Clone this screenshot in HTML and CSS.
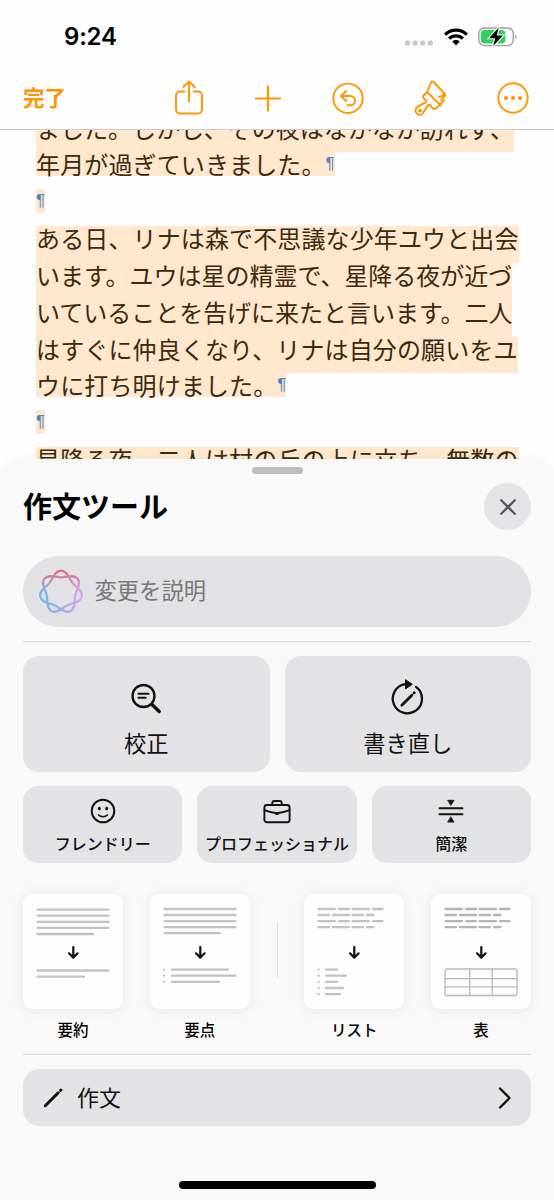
FILE: index.html
```html
<!DOCTYPE html>
<html lang="ja">
<head>
<meta charset="utf-8">
<title>作文ツール</title>
<link rel="stylesheet" href="styles.css">
</head>
<body>
<div class="screen">
  <header class="top">
    <div class="status">
      <span class="time">9:24</span>
      <div class="indicators">
        <svg width="28" height="6" viewBox="0 0 28 6" fill="#c9c9cb"><rect x="0" y=".5" width="5" height="5" rx="1.5"/><rect x="7.6" y=".5" width="5" height="5" rx="1.5"/><rect x="15.2" y=".5" width="5" height="5" rx="1.5"/><rect x="22.8" y=".5" width="5" height="5" rx="1.5"/></svg>
        <svg class="wifi" width="24" height="18" viewBox="0 0 24 18" fill="none" stroke="#000" stroke-width="3.1"><path d="M1.2 6.6C7 .6 17 .6 22.8 6.600"/><path d="M5.100 10.700C9 6.900 15 6.900 18.900 10.700"/><path d="M12 17.400l-3.700-3.900c2-1.900 5.400-1.900 7.400 0z" fill="#000" stroke="none"/></svg>
        <svg class="battery" width="40" height="22" viewBox="0 0 40 22"><rect x=".8" y="2" width="34.500" height="17.600" rx="5.500" fill="#fff" stroke="#a0a0a2" stroke-width="1.400"/><path d="M37.300 8.500v4.600c1.500-.5 1.500-4.100 0-4.600z" fill="#88888a"/><rect x="2.800" y="4" width="24.500" height="13.600" rx="3.500" fill="#34cf5e"/><path d="M20.700 1.500L11 12.200h6.200l-2 7.900L25 9.400h-6.300z" fill="#000" stroke="#fff" stroke-width="2" paint-order="stroke"/></svg>
      </div>
    </div>
    <nav class="toolbar">
      <span class="done">完了</span>
      <div class="tools">
        <svg width="36" height="38" viewBox="0 0 36 38"><path d="M13.300 12.500H9a4 4 0 0 0-4 4V30.500a4 4 0 0 0 4 4H27a4 4 0 0 0 4-4V16.500a4 4 0 0 0-4-4H22.700M18 22.500V2.500M12.300 8L18 2.300L23.700 8"/></svg>
        <svg class="plus" width="36" height="38" viewBox="0 0 36 38"><path d="M6 19.500H30M18 7.500V31.500" stroke-width="2.200"/></svg>
        <svg class="undo" width="36" height="38" viewBox="0 0 36 38"><circle cx="18" cy="19.300" r="14.700"/><path d="M16 12L11 17L16 22M11.300 17H20.500A4.600 4.600 0 0 1 20.500 26.200H17.500"/></svg>
        <svg class="brush" width="36" height="38" viewBox="0 0 36 38"><path d="M16.200 13L20.200 3.200Q21 1.700 22.500 3L33.300 14.200Q35 16 33.300 17.800L30 21.200M16.200 13L29.800 26.600M32.800 15.300Q31 18.600 27.800 17.600M16.200 13L12.800 16.200Q11.300 17.600 12.800 19.300L15 21.600Q15.700 22.800 14.500 23.600L6.600 27.700C3.700 29.600 4.200 33 5.600 34.300C7.800 36.800 10.800 36.200 12.200 33.700L16.800 26.500Q17.800 25.200 19 26.100L21.800 29.300Q23.500 30.700 25.200 29.300L33.300 21.200"/><circle cx="8.900" cy="31.600" r="1" fill="#ff9500"/></svg>
        <svg width="36" height="38" viewBox="0 0 36 38"><circle cx="18" cy="19" r="14.700"/><g fill="#ff9500" stroke="none"><circle cx="11" cy="19" r="2.100"/><circle cx="18" cy="19" r="2.100"/><circle cx="25" cy="19" r="2.100"/></g></svg>
      </div>
    </nav>
  </header>

  <main class="document">
    <div class="line tight"><span>ました。しかし、その夜はなかなか訪れず、</span></div>
    <div class="line last"><span>年月が過ぎていきました。<i>¶</i></span></div>
    <div class="line last"><span><i>¶</i></span></div>
    <div class="line"><span>ある日、リナは森で不思議な少年ユウと出会</span></div>
    <div class="line tight"><span>います。ユウは星の精霊で、星降る夜が近づ</span></div>
    <div class="line tight"><span>いていることを告げに来たと言います。二人</span></div>
    <div class="line"><span>はすぐに仲良くなり、リナは自分の願いをユ</span></div>
    <div class="line last"><span>ウに打ち明けました。<i>¶</i></span></div>
    <div class="line last"><span><i>¶</i></span></div>
    <div class="line"><span>星降る夜、二人は村の丘の上に立ち、無数の</span></div>
  </main>

  <section class="sheet">
    <div class="grabber"></div>
    <div class="sheet-head">
      <h1>作文ツール</h1>
      <button class="close"><svg width="18" height="18" viewBox="0 0 18 18" fill="none" stroke="#56565a" stroke-width="2.300" stroke-linecap="round"><path d="M2.200 2.200L15.800 15.800M15.800 2.200L2.200 15.800"/></svg></button>
    </div>
    <div class="prompt">
      <svg width="48" height="48" viewBox="-24 -24 48 48">
        <defs>
          <linearGradient id="side"><stop offset=".1" stop-color="#6db9e8"/><stop offset=".5" stop-color="#98a9ee"/><stop offset=".9" stop-color="#d6a2f3"/></linearGradient>
          <linearGradient id="warm" x2="0" y2="1"><stop offset=".08" stop-color="#df727b"/><stop offset=".28" stop-color="#dc8295" stop-opacity=".65"/><stop offset=".52" stop-color="#e091b5" stop-opacity="0"/></linearGradient>
          <path id="lobe" d="M-11.500 -9.170C-7.800 -13.800 -6.200 -21.300 0 -21.300S7.800 -13.800 11.500 -9.170"/>
          <mask id="flower" maskUnits="userSpaceOnUse" x="-24" y="-24" width="48" height="48"><g fill="none" stroke="#fff" stroke-width="2.200"><use href="#lobe"/><use href="#lobe" transform="rotate(51.430)"/><use href="#lobe" transform="rotate(102.860)"/><use href="#lobe" transform="rotate(154.290)"/><use href="#lobe" transform="rotate(205.710)"/><use href="#lobe" transform="rotate(257.140)"/><use href="#lobe" transform="rotate(308.570)"/></g></mask>
        </defs>
        <g mask="url(#flower)"><rect x="-24" y="-24" width="48" height="48" fill="url(#side)"/><rect x="-24" y="-24" width="48" height="48" fill="url(#warm)"/></g>
      </svg>
      <span>変更を説明</span>
    </div>
    <hr>
    <div class="row big">
      <button class="tile"><svg width="36" height="36" viewBox="0 0 36 36" stroke-width="2.400"><circle cx="15.500" cy="15" r="11"/><path d="M10.400 12.800H20.600M10.400 16.800H17.800" stroke-width="1.900"/><path d="M24 23.500L31.200 30.500" stroke-width="3.400"/></svg><span>校正</span></button>
      <button class="tile"><svg width="36" height="36" viewBox="0 0 36 36" stroke-width="2.300"><path d="M15.500 3.200A14.600 14.600 0 1 0 26 5.900"/><path d="M15.800-1.100L22.300 3.300L15.800 7.700z" fill="#111" stroke-width="1"/><path d="M11.800 24.200L21.800 14.200" stroke-width="2.800"/><path d="M24 12L24.300 11.700" stroke-width="2.800"/></svg><span>書き直し</span></button>
    </div>
    <div class="row small">
      <button class="tile"><svg width="28" height="28" viewBox="0 0 28 28" stroke-width="2"><circle cx="14" cy="14" r="11.300"/><path d="M9.600 18C12 20.300 16 20.300 18.400 18" stroke-width="1.700"/><g fill="#111" stroke="none"><ellipse cx="10.300" cy="11.600" rx="1.500" ry="1.800"/><ellipse cx="17.700" cy="11.600" rx="1.500" ry="1.800"/></g></svg><span>フレンドリー</span></button>
      <button class="tile"><svg width="28" height="28" viewBox="0 0 28 28" stroke-width="1.900"><rect x="1.400" y="8" width="25.200" height="17.200" rx="2.500"/><path d="M9.300 8V6Q9.300 4 11.300 4H16.700Q18.700 4 18.700 6V8M1.500 13.100Q8 15.800 14 16.200Q20 15.800 26.500 13.100"/><rect x="12.200" y="15.100" width="3.600" height="2.900" rx="1" fill="#111" stroke="none"/></svg><span>プロフェッショナル</span></button>
      <button class="tile"><svg width="28" height="28" viewBox="0 0 28 28" stroke-width="1.900"><path d="M2.500 11.200H25.500M2.500 17.200H25.500"/><path d="M11 3.300H17L14 8.300zM11 25.100H17L14 20.100z" fill="#111" stroke-width=".8"/></svg><span>簡潔</span></button>
    </div>
    <div class="formats">
      <div class="format"><div class="paper"><svg width="100" height="115" viewBox="0 0 100 115"><path d="M14.500 15.700H85.500M14.500 21.700H85.500M14.500 27.800H85.500M14.500 33.900H85.500M14.500 40H70M14.500 76.500H85.500M14.500 82.600H61"/><path class="arrow" d="M50.300 53V63.300M46 59.300L50.300 63.600L54.600 59.300"/></svg></div><span>要約</span></div>
      <div class="format"><div class="paper"><svg width="100" height="115" viewBox="0 0 100 115"><path d="M14.500 15H85.500M14.500 21H85.500M14.500 27.100H85.500M14.500 33.200H85.500M14.500 39.200H70M22 75.600H78M22 81.700H85.500M22 87.800H69M14 75.600h.1M14 81.700h.1M14 87.800h.1"/><path class="arrow" d="M50.300 53V63.300M46 59.300L50.300 63.600L54.600 59.300"/></svg></div><span>要点</span></div>
      <div class="separator"></div>
      <div class="format"><div class="paper"><svg width="100" height="115" viewBox="0 0 100 115"><path d="M14.500 15H31M35 15H45M48.500 15H65M69 15H78.500M14.500 21H25M29 21H45M48.500 21H59M63 21H69.500M14.500 27.100H31M35 27.100H45M48.500 27.100H65M69 27.100H78.500M14.500 33.200H25M29 33.200H45M48.500 33.200H59M63 33.200H69.500M22 75.600H33M22 81.700H42M22 87.800H33M22 94H39M22 100.200H36M14.500 75.600h.1M14.500 81.700h.1M14.500 87.800h.1M14.500 94h.1M14.500 100.200h.1"/><path class="arrow" d="M50.300 53V63.300M46 59.300L50.300 63.600L54.600 59.300"/></svg></div><span>リスト</span></div>
      <div class="format"><div class="paper"><svg width="100" height="115" viewBox="0 0 100 115"><path class="dark" d="M14.500 15H31M35 15H45M48.500 15H65M69 15H78.500M14.500 21H25M29 21H45M48.500 21H59M63 21H69.500M14.500 27.100H31M35 27.100H45M48.500 27.100H65M69 27.100H78.500M14.500 33.200H25M29 33.200H45M48.500 33.200H59M63 33.200H69.500"/><g class="grid"><rect x="14" y="75" width="72" height="26.500" rx="2"/><path d="M14 84.700H86M14 92.800H86M38.700 75V101.500M61.300 75V101.500"/></g><path class="arrow" d="M50.300 53V63.300M46 59.300L50.300 63.600L54.600 59.300"/></svg></div><span>表</span></div>
    </div>
    <hr>
    <button class="compose">
      <svg width="22" height="22" viewBox="0 0 22 22" fill="none" stroke="#111" stroke-width="3" stroke-linecap="round"><path d="M2.300 18.700L15.200 5.800"/><path d="M17.600 3.400L18 3"/></svg>
      <span>作文</span>
      <svg class="chevron" width="14" height="24" viewBox="0 0 14 24" fill="none" stroke="#111" stroke-width="2.300" stroke-linecap="round" stroke-linejoin="round"><path d="M2 2.500L11.500 12L2 21.500"/></svg>
    </button>
    <div class="home"></div>
  </section>
</div>
</body>
</html>
```
FILE: styles.css
```css
* { box-sizing: border-box; }
body { margin: 0; background: #fff; font-family: "Liberation Sans", "Noto Sans CJK JP", sans-serif; color: #000; }
button { border: 0; padding: 0; font: inherit; color: inherit; }
svg { display: block; flex: none; overflow: visible; }
span { white-space: nowrap; }
.screen { width: 554px; height: 1200px; overflow: hidden; display: flex; flex-direction: column; background: #fefefe; }

.top { height: 130px; flex: none; padding-top: 1px; border-bottom: 1px solid #ccccce; }
.status { height: 72px; padding: 0 36.500px 0 64px; display: flex; align-items: center; justify-content: space-between; }
.time { font: 600 24px/28px Inter, sans-serif; letter-spacing: -.2px; }
.indicators { display: flex; align-items: center; }
.indicators > svg:first-child { margin-top: 12px; }
.wifi { margin-left: 10.500px; }
.battery { margin-left: 10px; }
.toolbar { height: 50px; padding: 0 23px; display: flex; align-items: center; justify-content: space-between; color: #ff9500; }
.done { font-weight: 700; font-size: 21.500px; line-height: 30px; padding-top: 1px; }
.tools { display: flex; }
.tools svg { fill: none; stroke: #ff9500; stroke-width: 1.900; stroke-linecap: round; stroke-linejoin: round; }
.tools .plus { margin-left: 43px; }
.tools .undo { margin-left: 44px; }
.tools .brush { margin: 0 48px 0 45px; }

.document { height: 330px; flex: none; overflow: hidden; padding-left: 36px; color: #3b2a0f; font-size: 24px; line-height: 28px; }
.document .line:first-child { margin-top: -14.500px; }
.line { height: 36.850px; display: flex; align-items: flex-start; letter-spacing: .13px; }
.line span { height: 36.850px; background: #ffe8cd; }
.line.tight { letter-spacing: -.02px; }
.line.last span { height: 24px; }
.line i { display: inline-block; width: 9px; font: 17px/24px "Liberation Sans", sans-serif; color: #4b83c4; letter-spacing: 0; vertical-align: top; }

.sheet { flex: 1; margin-top: -1px; padding: 8px 23px 0; display: flex; flex-direction: column; background: #f9f9f9; border-radius: 22px 22px 0 0; box-shadow: 0 0 8px rgba(0,0,0,.05); position: relative; }
.grabber { width: 51px; height: 7px; border-radius: 4px; background: #bdbdbf; align-self: center; }
.sheet-head { height: 47px; margin-top: 9px; display: flex; align-items: center; justify-content: space-between; }
h1 { margin: 2px 0 0; font-size: 29px; line-height: 40px; font-weight: 700; }
.close { width: 47px; height: 47px; border-radius: 50%; background: #e4e4e6; display: grid; place-items: center; }
.prompt { height: 71px; margin-top: 26px; border-radius: 36px; background: #e2e2e4; padding-left: 13.500px; display: flex; align-items: center; gap: 10px; color: #77777a; font-size: 22.300px; }
.prompt span { margin-top: -6px; }
hr { width: 100%; height: 1px; border: 0; margin: 14px 0; background: #dcdcde; flex: none; }
.row { display: grid; gap: 15px; }
.row .tile { background: #e3e3e5; border-radius: 16px; display: flex; flex-direction: column; align-items: center; color: #111; }
.tile svg { fill: none; stroke: #111; stroke-linecap: round; stroke-linejoin: round; }
.big { grid-template-columns: 1fr 1fr; height: 116px; }
.big .tile { padding-top: 25px; font-size: 22.300px; line-height: 30px; gap: 13px; }
.small { grid-template-columns: repeat(3, 1fr); height: 77px; margin-top: 14px; }
.small .tile { padding-top: 11px; border-radius: 15px; font-size: 16px; line-height: 24px; font-weight: 500; gap: 8px; }
.formats { display: flex; margin-top: 31px; height: 146px; flex: none; justify-content: space-between; }
.format { width: 100px; display: flex; flex-direction: column; align-items: center; gap: 11px; font-size: 15.500px; line-height: 22px; font-weight: 500; }
.paper { width: 100px; height: 115px; border-radius: 9px; background: #fdfdfd; box-shadow: 0 1px 14px rgba(0,0,0,.07); }
.paper svg { fill: none; stroke: #c2c2c3; stroke-width: 2.300; stroke-linecap: round; stroke-linejoin: round; }
.paper .dark { stroke: #b5b5b6; }
.paper .grid { stroke: #b9b9ba; stroke-width: 1.300; }
.paper .arrow { stroke: #111; stroke-width: 2.200; }
.separator { width: 1px; height: 56px; margin-top: 28px; background: #dedee0; }
.formats + hr { margin-top: 14px; }
.compose { height: 57px; border-radius: 16px; background: #e3e3e5; padding: 0 19px 0 20px; display: flex; align-items: center; gap: 12px; font-size: 22px; color: #111; flex: none; }
.compose span { margin-top: -4px; }
.chevron { margin-left: auto; }
.home { width: 197px; height: 8px; border-radius: 4px; background: #000; align-self: center; margin-top: 55px; flex: none; }
```
